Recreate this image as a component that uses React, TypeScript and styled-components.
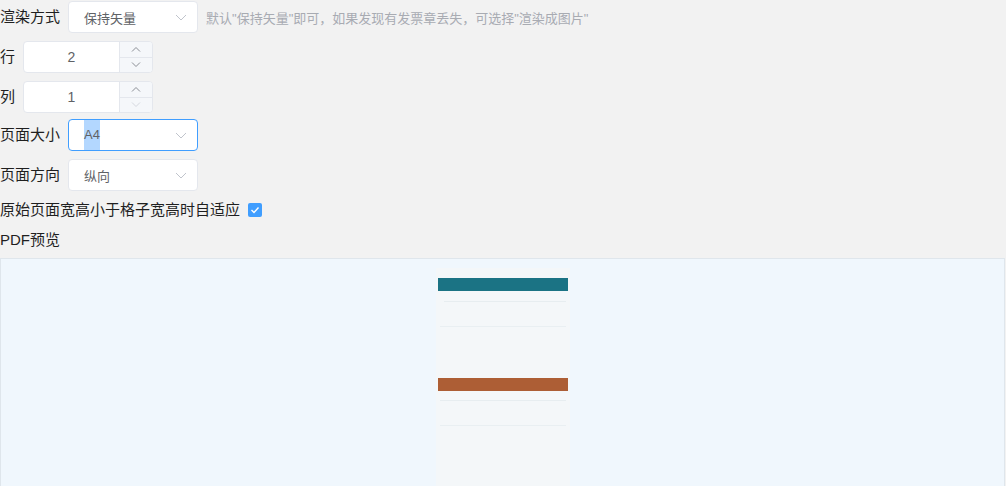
import React from 'react';
import styled, {createGlobalStyle} from 'styled-components';

const GlobalStyle = createGlobalStyle`
  html, body {
    margin: 0;
    padding: 0;
    background: #f2f2f2;
    font-family: 'Liberation Sans', 'Noto Sans CJK SC', sans-serif;
    color: #1f1f1f;
  }
`;

function Chevron({up, light}: {up?: boolean; light?: boolean}) {
  return (
    <svg width="10" height="6" viewBox="0 0 10 6" fill="none">
      <path
        d={up ? 'M1 5.5L5 1.5L9 5.5' : 'M1 0.5L5 4.5L9 0.5'}
        stroke={light ? '#d4d7de' : '#8a8d94'}
        strokeWidth="1"
      />
    </svg>
  );
}

function SelectBox({value, focused}: {value: string; focused?: boolean}) {
  return (
    <Select $focused={focused}>
      {focused ? <Selected>{value}</Selected> : <span>{value}</span>}
      <Arrow>
        <svg width="12" height="7" viewBox="0 0 12 7" fill="none">
          <path d="M1 1L6 6L11 1" stroke="#c0c4cc" strokeWidth="1" />
        </svg>
      </Arrow>
    </Select>
  );
}

function NumberInput({value, minReached}: {value: number; minReached?: boolean}) {
  return (
    <NumberBox>
      <NumberValue>{value}</NumberValue>
      <Controls>
        <Step>
          <Chevron up />
        </Step>
        <Step $bottom>
          <Chevron light={minReached} />
        </Step>
      </Controls>
    </NumberBox>
  );
}

export default function App() {
  return (
    <>
      <GlobalStyle />
      <Form>
        <Row $gap={8}>
          <Label>渲染方式</Label>
          <SelectBox value="保持矢量" />
          <Hint>默认"保持矢量"即可，如果发现有发票章丢失，可选择"渲染成图片"</Hint>
        </Row>
        <Row $gap={8}>
          <Label>行</Label>
          <NumberInput value={2} />
        </Row>
        <Row $gap={6}>
          <Label>列</Label>
          <NumberInput value={1} minReached />
        </Row>
        <Row $gap={8}>
          <Label>页面大小</Label>
          <SelectBox value="A4" focused />
        </Row>
        <Row $gap={8}>
          <Label>页面方向</Label>
          <SelectBox value="纵向" />
        </Row>
        <CheckRow>
          <Label>原始页面宽高小于格子宽高时自适应</Label>
          <Checkbox>
            <svg width="10" height="8" viewBox="0 0 10 8" fill="none">
              <path d="M1.5 4L4 6.5L8.5 1.5" stroke="#fff" strokeWidth="1.4" />
            </svg>
          </Checkbox>
        </CheckRow>
        <Title>PDF预览</Title>
        <Preview>
          <Page>
            <svg width="134" height="230" viewBox="0 0 134 230">
              <rect x="0" y="0" width="134" height="230" fill="#f4f7f9" />
              <rect x="2" y="10" width="130" height="13" fill="#1b7384" />
              <rect x="8" y="33" width="122" height="1" fill="#e7edf0" />
              <rect x="4" y="58" width="126" height="1" fill="#e9eff2" />
              <rect x="2" y="110" width="130" height="13" fill="#ad5e35" />
              <rect x="4" y="132" width="126" height="1" fill="#e7edf0" />
              <rect x="4" y="157" width="126" height="1" fill="#e9eff2" />
            </svg>
          </Page>
        </Preview>
      </Form>
    </>
  );
}

const Form = styled.div`
  display: flex;
  flex-direction: column;
  padding-top: 1px;
  width: 1006px;
`;

const Row = styled.div<{$gap: number}>`
  display: flex;
  align-items: center;
  height: 32px;
  margin-bottom: ${props => props.$gap}px;
`;

const Label = styled.span`
  font-size: 15px;
  line-height: 20px;
  margin-right: 8px;
  white-space: nowrap;
`;

const Select = styled.div<{$focused?: boolean}>`
  box-sizing: border-box;
  width: 130px;
  height: 32px;
  display: flex;
  align-items: center;
  justify-content: space-between;
  padding: 0 10px 0 15px;
  background: #fff;
  border: 1px solid ${props => (props.$focused ? '#409eff' : '#e4e7ed')};
  border-radius: 4px;
  font-size: 13px;
  color: #606266;
`;

const Selected = styled.span`
  background: #b3d7ff;
  line-height: 30px;
`;

const Arrow = styled.span`
  display: flex;
  align-items: center;
`;

const Hint = styled.span`
  margin-left: 8px;
  font-size: 13px;
  color: #a8abb2;
  white-space: nowrap;
`;

const NumberBox = styled.div`
  box-sizing: border-box;
  width: 130px;
  height: 32px;
  display: flex;
  background: #fff;
  border: 1px solid #e4e7ed;
  border-radius: 4px;
  overflow: hidden;
`;

const NumberValue = styled.div`
  flex: 1;
  display: flex;
  align-items: center;
  justify-content: center;
  font-size: 14px;
  color: #606266;
`;

const Controls = styled.div`
  width: 32px;
  display: flex;
  flex-direction: column;
  border-left: 1px solid #e4e7ed;
  background: #f5f7fa;
`;

const Step = styled.div<{$bottom?: boolean}>`
  flex: 1;
  display: flex;
  align-items: center;
  justify-content: center;
  border-top: ${props => (props.$bottom ? '1px solid #e4e7ed' : 'none')};
`;

const CheckRow = styled.div`
  display: flex;
  align-items: center;
  height: 20px;
  margin-top: 1px;
  margin-bottom: 10px;
`;

const Checkbox = styled.span`
  width: 14px;
  height: 14px;
  border-radius: 2px;
  background: #409eff;
  display: flex;
  align-items: center;
  justify-content: center;
`;

const Title = styled.div`
  font-size: 15px;
  line-height: 20px;
  margin-bottom: 8px;
`;

const Preview = styled.div`
  box-sizing: border-box;
  width: 1005px;
  height: 240px;
  display: flex;
  justify-content: center;
  background: #f0f7fd;
  border: 1px solid #dfe6ec;
  padding-top: 9px;
`;

const Page = styled.div`
  width: 134px;
  height: 230px;
`;
